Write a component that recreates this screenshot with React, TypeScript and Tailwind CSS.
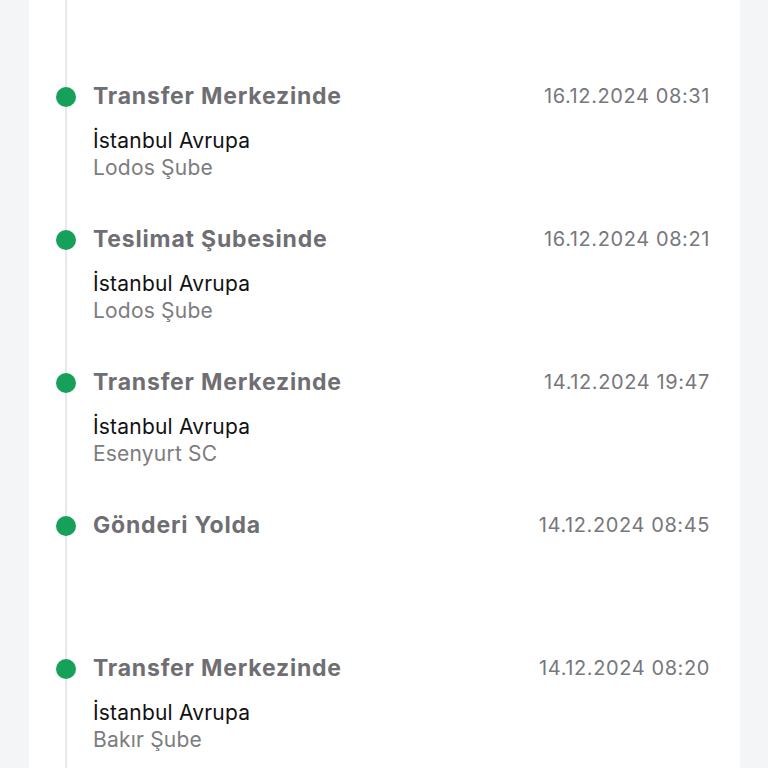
const events = [
  { title: "Transfer Merkezinde", date: "16.12.2024 08:31", city: "İstanbul Avrupa", branch: "Lodos Şube" },
  { title: "Teslimat Şubesinde", date: "16.12.2024 08:21", city: "İstanbul Avrupa", branch: "Lodos Şube" },
  { title: "Transfer Merkezinde", date: "14.12.2024 19:47", city: "İstanbul Avrupa", branch: "Esenyurt SC" },
  { title: "Gönderi Yolda", date: "14.12.2024 08:45" },
  { title: "Transfer Merkezinde", date: "14.12.2024 08:20", city: "İstanbul Avrupa", branch: "Bakır Şube" },
];

export default function App() {
  return (
    <main className="h-[768px] overflow-hidden bg-[#f4f5f7] pl-[29px] pr-[28px] font-['Inter',sans-serif]">
      <section className="relative h-full bg-white">
        <div className="absolute bottom-0 left-[36px] top-0 w-[2px] bg-[#e8e9ec]" />
        <ol className="flex flex-col pt-[82px]">
          {events.map((e, i) => (
            <li key={i} className="relative h-[143px] pl-[64px] pr-[30px]">
              <span className="absolute left-[27px] top-[5px] h-[20px] w-[20px] rounded-full bg-[#17a05a]" />
              <div className="flex h-[28px] items-center justify-between">
                <h3 className="text-[23px] font-bold tracking-[0.8px] text-[#6e6e73]">{e.title}</h3>
                <span className="text-[20px] tracking-[0.6px] text-[#77777c]">{e.date}</span>
              </div>
              {e.city && (
                <div className="mt-[17px] text-[21px] leading-[27px] tracking-[0.2px]">
                  <p className="text-[#111]">{e.city}</p>
                  <p className="text-[#7c7c80]">{e.branch}</p>
                </div>
              )}
            </li>
          ))}
        </ol>
      </section>
    </main>
  );
}
